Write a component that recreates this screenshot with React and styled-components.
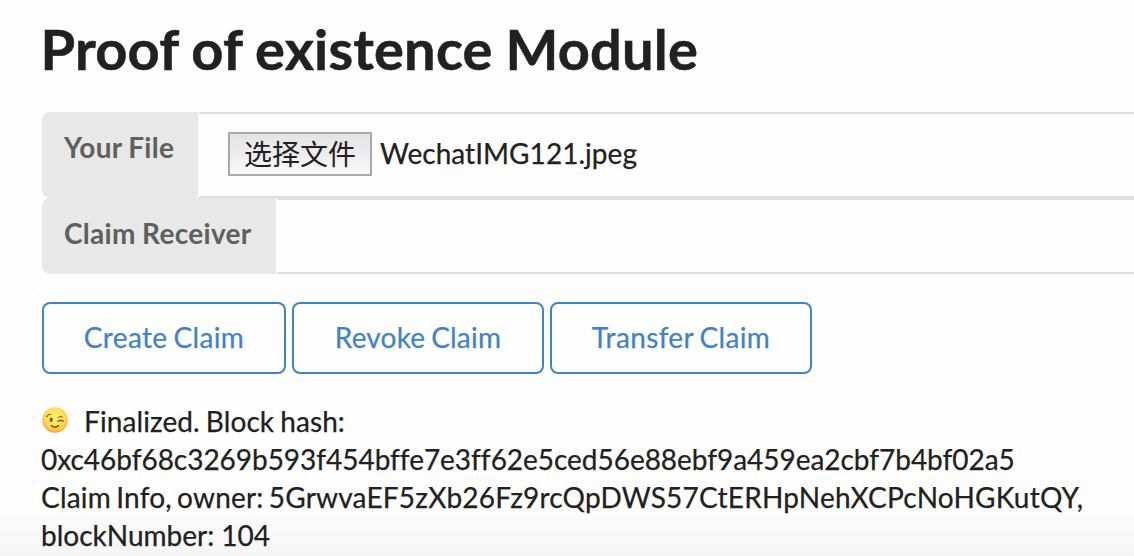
import React from 'react';
import styled, { createGlobalStyle } from 'styled-components';

const GlobalStyle = createGlobalStyle`
  * { box-sizing: border-box; }
  html, body { margin: 0; background: #fefefe; overflow: hidden; }
  body { font-family: Lato, "Noto Sans CJK SC", sans-serif; font-size: 28px; color: #212121; }
`;

const Page = styled.main`
  width: 1134px;
  height: 556px;
  overflow: hidden;
  padding: 13px 0 0 42px;
  background: linear-gradient(#fefefe 0, #fefefe 500px, #f5f5f5 556px);
`;

const Title = styled.h1`
  margin: 0 0 27px -1.5px;
  font-size: 56px;
  line-height: 72px;
  font-weight: 700;
  letter-spacing: 0.18px;
  word-spacing: -0.9px;
  white-space: nowrap;
  -webkit-text-stroke: 0.5px currentColor;
`;

const Field = styled.div`
  display: flex;
  width: 1200px;
  height: ${(p) => p.$height}px;
`;

const FieldLabel = styled.div`
  flex: none;
  width: ${(p) => p.$width}px;
  padding: 21px 0 0 22px;
  border-radius: 8px 0 0 8px;
  background: #e8e8e8;
  color: #606060;
  font-weight: 700;
  line-height: 28px;
  letter-spacing: 0.3px;
  word-spacing: -0.8px;
  white-space: nowrap;
`;

const FieldInput = styled.div`
  flex: 1;
  display: flex;
  align-items: center;
  gap: 8px;
  padding: 0 0 2px 28px;
  border: 2px solid #dededf;
  border-left-color: transparent;
  white-space: nowrap;
`;

const FileButton = styled.button`
  width: 144px;
  height: 44px;
  padding: 0 0 2px;
  border: 2px solid #a9a9a9;
  border-radius: 0;
  background: linear-gradient(#e3e3e3, #f8f8f8);
  color: #212121;
  font: 28px/38px "Noto Sans CJK SC", sans-serif;
`;

const FileName = styled.span`
  position: relative;
  top: -1px;
  letter-spacing: 0.04px;
  -webkit-text-stroke: 0.25px currentColor;
`;

const Actions = styled.div`
  display: flex;
  gap: 6px;
  margin-top: 28px;
`;

const ActionButton = styled.button`
  width: ${(p) => p.$width}px;
  height: 72px;
  padding: 0 0 2px;
  border: 2px solid #4183c4;
  border-radius: 8px;
  background: transparent;
  color: #4183c4;
  font: 400 28px/28px Lato, sans-serif;
  letter-spacing: ${(p) => p.$tracking}px;
  word-spacing: -1.5px;
  -webkit-text-stroke: 0.25px currentColor;
`;

const Status = styled.div`
  margin: 28px 0 0 -1px;
  line-height: 38px;
  white-space: nowrap;
  -webkit-text-stroke: 0.25px currentColor;
`;

const StatusLine = styled.div`
  height: 38px;
  letter-spacing: ${(p) => p.$tracking || 0}px;
  word-spacing: ${(p) => p.$wordSpacing || 0}px;
`;

const Emoji = styled.svg`
  width: 26px;
  height: 26px;
  margin: 0 16px 0 1px;
  vertical-align: -1px;
`;

function WinkingFace() {
  return (
    <Emoji viewBox="0 0 26 26" role="img" aria-label="winking face">
      <defs>
        <radialGradient id="face" cx="50%" cy="40%" r="58%">
          <stop offset="0" stopColor="#fff078" />
          <stop offset="0.6" stopColor="#ffdf58" />
          <stop offset="0.88" stopColor="#fbc043" />
          <stop offset="1" stopColor="#ee9f35" />
        </radialGradient>
      </defs>
      <circle cx="13" cy="13" r="12.8" fill="url(#face)" />
      <ellipse cx="9.2" cy="12.8" rx="1.5" ry="2.2" fill="#79501b" />
      <g fill="none" stroke="#79501b" strokeLinecap="round">
        <path d="M4.7 9.8Q6 7.3 8.7 7.3" strokeWidth="1.1" />
        <path d="M16.2 10.2Q18.2 8.7 20.5 10" strokeWidth="1" />
        <path d="M16 14.3Q18.4 12.6 21.2 14.1" strokeWidth="1.4" />
        <path d="M9.3 18.7Q13 21.7 16.7 18.7" strokeWidth="1.5" />
      </g>
    </Emoji>
  );
}

export default function App() {
  return (
    <Page>
      <GlobalStyle />
      <Title>Proof of existence Module</Title>
      <Field $height={86}>
        <FieldLabel $width={156}>Your File</FieldLabel>
        <FieldInput>
          <FileButton>选择文件</FileButton>
          <FileName>WechatIMG121.jpeg</FileName>
        </FieldInput>
      </Field>
      <Field $height={76}>
        <FieldLabel $width={234}>Claim Receiver</FieldLabel>
        <FieldInput />
      </Field>
      <Actions>
        <ActionButton $width={244} $tracking={0.35}>Create Claim</ActionButton>
        <ActionButton $width={252} $tracking={0.2}>Revoke Claim</ActionButton>
        <ActionButton $width={262} $tracking={0.35}>Transfer Claim</ActionButton>
      </Actions>
      <Status>
        <StatusLine $tracking={0.1} $wordSpacing={-1.3}>
          <WinkingFace />
          Finalized. Block hash:
        </StatusLine>
        <StatusLine $tracking={-0.035}>
          0xc46bf68c3269b593f454bffe7e3ff62e5ced56e88ebf9a459ea2cbf7b4bf02a5
        </StatusLine>
        <StatusLine $tracking={0.21} $wordSpacing={-2.2}>
          Claim Info, owner: 5GrwvaEF5zXb26Fz9rcQpDWS57CtERHpNehXCPcNoHGKutQY,
        </StatusLine>
        <StatusLine>blockNumber: 104</StatusLine>
      </Status>
    </Page>
  );
}
